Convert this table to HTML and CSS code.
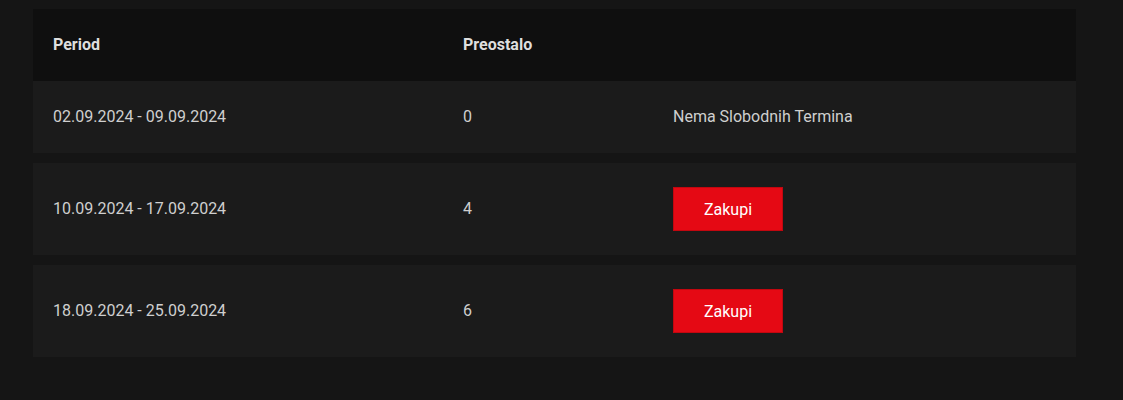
FILE: index.html
```html
<!DOCTYPE html>
<html>
<head>
<meta charset="utf-8">
<link rel="stylesheet" href="styles.css">
</head>
<body>
<div class="table">
  <div class="row head">
    <div class="cell">Period</div>
    <div class="cell">Preostalo</div>
    <div class="cell"></div>
  </div>
  <div class="body">
    <div class="row">
      <div class="cell">02.09.2024 - 09.09.2024</div>
      <div class="cell">0</div>
      <div class="cell">Nema Slobodnih Termina</div>
    </div>
    <div class="row">
      <div class="cell">10.09.2024 - 17.09.2024</div>
      <div class="cell">4</div>
      <div class="cell"><button class="buy">Zakupi</button></div>
    </div>
    <div class="row">
      <div class="cell">18.09.2024 - 25.09.2024</div>
      <div class="cell">6</div>
      <div class="cell"><button class="buy">Zakupi</button></div>
    </div>
  </div>
</div>
</body>
</html>
```
FILE: styles.css
```css
html, body {
  margin: 0;
  background: #151515;
}
body {
  padding: 9px 47px 0 33px;
  font-family: Roboto, "Liberation Sans", sans-serif;
  font-size: 16px;
  color: #cfcfcf;
}
.table {
  display: flex;
  flex-direction: column;
}
.body {
  display: flex;
  flex-direction: column;
  gap: 10px;
}
.row {
  display: grid;
  grid-template-columns: 410px 210px 1fr;
  background: #1b1b1b;
  align-items: center;
}
.row.head {
  background: #0f0f0f;
  font-weight: 700;
  color: #dedede;
}
.cell {
  padding: 24px 20px;
  line-height: 24px;
  min-height: 24px;
}
.buy {
  display: block;
  width: 110px;
  height: 44px;
  background: #e50914;
  border: 1px solid #c2070f;
  color: #fff;
  font-family: Roboto, "Liberation Sans", sans-serif;
  font-size: 16px;
  padding: 0;
  cursor: pointer;
}
```
